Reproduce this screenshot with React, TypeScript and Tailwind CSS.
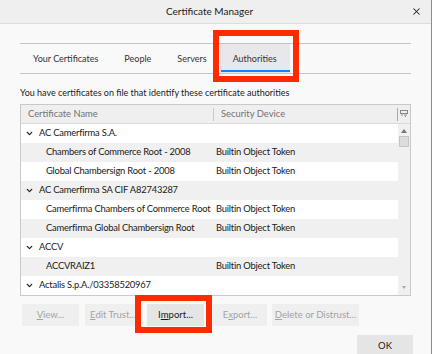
import { ChevronDown, X } from "lucide-react"

const rows = [
  { group: true, name: "AC Camerfirma S.A.", device: "" },
  { group: false, name: "Chambers of Commerce Root - 2008", device: "Builtin Object Token" },
  { group: false, name: "Global Chambersign Root - 2008", device: "Builtin Object Token" },
  { group: true, name: "AC Camerfirma SA CIF A82743287", device: "" },
  { group: false, name: "Camerfirma Chambers of Commerce Root", device: "Builtin Object Token" },
  { group: false, name: "Camerfirma Global Chambersign Root", device: "Builtin Object Token" },
  { group: true, name: "ACCV", device: "" },
  { group: false, name: "ACCVRAIZ1", device: "Builtin Object Token" },
  { group: true, name: "Actalis S.p.A./03358520967", device: "" },
]

const tabs = ["Your Certificates", "People", "Servers", "Authorities"]

function Btn({ pre, u, rest, enabled, w }: { pre: string; u: string; rest: string; enabled?: boolean; w: string }) {
  return (
    <div
      className={`${w} h-[22px] shrink-0 whitespace-nowrap flex items-center justify-center text-[9.5px] ${
        enabled ? "bg-[#e5e5e5] text-[#1a1a1a]" : "bg-[#efefef] text-[#a3a3a3]"
      }`}
    >
      {pre}
      <span className="underline">{u}</span>
      {rest}
    </div>
  )
}

export default function App() {
  return (
    <div className="relative w-[432px] h-[354px] overflow-hidden bg-[#f9f9f9] border-r border-[#8c8c8c] font-['Lato',sans-serif] text-[#1a1a1a]">
      {/* Title bar */}
      <div className="h-[24px] bg-[#efefef] border-b border-[#dcdcdc] flex items-center">
        <div className="flex-1 text-center text-[10px] pl-[8px]">Certificate Manager</div>
        <X className="w-[11px] h-[11px] mr-[9px] text-[#222]" strokeWidth={2.2} />
      </div>

      <div className="pl-[20px] pr-[20px]">
        {/* Tabs */}
        <div className="mt-[19px] h-[31px] border-t border-b border-[#c6c6c6] flex text-[9px] text-[#333]">
          {tabs.map((t) => (
            <div
              key={t}
              className={`relative px-[13px] flex items-center ${t === "Authorities" ? "bg-[#e8e8ec]" : ""}`}
            >
              {t}
              {t === "Authorities" && (
                <div className="absolute left-[1px] right-0 bottom-[1px] h-[2px] bg-[#0a84ff]" />
              )}
            </div>
          ))}
        </div>

        <div className="mt-[12px] text-[9px] leading-[14px]">
          You have certificates on file that identify these certificate authorities
        </div>

        {/* Table */}
        <div className="mt-[4px] h-[192px] border border-[#c9c9c9] bg-white flex flex-col text-[9.4px]">
          <div className="h-[19px] bg-[#efeff1] border-b border-[#dadada] flex items-center text-[#727272] shrink-0">
            <div className="w-[192px] pl-[7px]">Certificate Name</div>
            <div className="w-[1px] h-[13px] bg-[#c9c9c9]" />
            <div className="flex-1 pl-[7px]">Security Device</div>
            <div className="w-[1px] h-[13px] bg-[#a9a9a9]" />
            <div className="w-[12px] flex justify-center">
              <svg width="8" height="8" viewBox="0 0 8 8">
                <rect x="0.5" y="0.5" width="7" height="3" fill="none" stroke="#888" />
                <path d="M1 5h2M4 5h3M5 6.5h1" stroke="#888" />
              </svg>
            </div>
          </div>
          <div className="flex flex-1 min-h-0">
            <div className="flex-1 overflow-hidden tracking-[-0.2px]">
              {rows.map((r, i) => (
                <div
                  key={i}
                  className={`h-[19px] flex items-center whitespace-nowrap ${i % 2 === 1 ? "bg-[#f0f0f0]" : "bg-white"}`}
                >
                  {r.group ? (
                    <div className="w-[192px] flex items-center pl-[4px]">
                      <ChevronDown className="w-[9px] h-[9px] mr-[5px] text-[#222]" strokeWidth={3.5} />
                      {r.name}
                    </div>
                  ) : (
                    <div className="w-[192px] overflow-hidden pl-[25px]">{r.name}</div>
                  )}
                  <div className="pl-[3px]">{r.device}</div>
                </div>
              ))}
            </div>
            {/* Scrollbar */}
            <div className="w-[12px] bg-[#f0f0f0] flex flex-col items-center">
              <svg width="6" height="4" viewBox="0 0 6 4" className="mt-[5px]">
                <path d="M0 4L3 0L6 4Z" fill="#777" />
              </svg>
              <div className="mt-[3px] w-[10px] h-[11px] bg-[#dcdcdc] border border-[#c4c4c4]" />
              <div className="flex-1" />
              <svg width="4" height="3" viewBox="0 0 4 3" className="mb-[6px]">
                <path d="M0 0L2 3L4 0Z" fill="#aaa" />
              </svg>
            </div>
          </div>
        </div>

        {/* Buttons */}
        <div className="mt-[8px] flex pl-[2px]">
          <Btn pre="" u="V" rest="iew..." w="w-[57px]" />
          <div className="w-[6px]" />
          <Btn pre="" u="E" rest="dit Trust..." w="w-[56px]" />
          <div className="w-[6px]" />
          <Btn pre="I" u="m" rest="port..." w="w-[57px]" enabled />
          <div className="w-[9px]" />
          <Btn pre="E" u="x" rest="port..." w="w-[54px]" />
          <div className="w-[5px]" />
          <Btn pre="" u="D" rest="elete or Distrust..." w="w-[87px]" />
        </div>

        <div className="mt-[9px] flex justify-end mr-[-2px]">
          <div className="w-[56px] h-[22px] bg-[#e5e5e5] flex items-center justify-center text-[9.5px]">OK</div>
        </div>
      </div>

      {/* Annotation boxes */}
      <div className="absolute left-[213px] top-[30px] w-[86px] h-[52px] border-[6px] border-[#ff2a00]" />
      <div className="absolute left-[135px] top-[295px] w-[77px] h-[38px] border-[6px] border-[#ff2a00]" />
    </div>
  )
}
